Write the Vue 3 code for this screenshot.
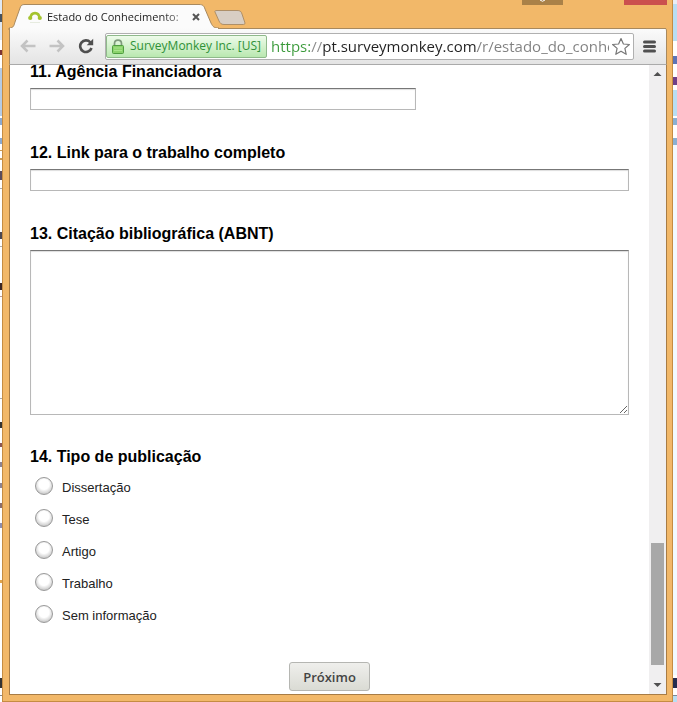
<template>
  <div class="desktop">
    <svg class="behind behind-left" viewBox="0 0 2 702" preserveAspectRatio="none" aria-hidden="true">
      <rect v-for="(s, i) in leftStrips" :key="i" x="0" :y="s[0]" width="2" :height="s[1]" :fill="s[2]" />
    </svg>
    <svg class="behind behind-right" viewBox="0 0 4 702" preserveAspectRatio="none" aria-hidden="true">
      <rect v-for="(s, i) in rightStrips" :key="i" x="0" :y="s[0]" width="4" :height="s[1]" :fill="s[2]" />
    </svg>

    <div class="window">
      <div class="tab-strip">
        <div class="tab">
          <svg class="tab-shape" width="236" height="28" viewBox="0 0 236 28" aria-hidden="true">
            <path d="M0 30 V28 C5 28 5 25 6 22 L11 8 C12 5 13 4.500 16 4.500 H190 C194 4.500 195 6 196 9 L202 23 C204 27 205 28 210 28 V30 Z" fill="#fbfbfb" stroke="#a8895e" />
            <path d="M208 10.500 H228 C231 10.500 232 11 233 14 L236 23 C236 24.500 235 24.500 233 24.500 H215 C212 24.500 211 23 210 21 L206 12 C205.500 11 206 10.500 208 10.500 Z" fill="#d8cec4" stroke="#ae8f68" />
          </svg>
          <svg class="favicon" width="16" height="14" viewBox="0 0 16 14" aria-hidden="true">
            <path d="M3.500 8 C4 1.500 12 1.500 12.500 8" fill="none" stroke="#a4c32f" stroke-width="2.600" />
            <circle cx="3.200" cy="8" r="2.100" fill="#a4c32f" />
            <circle cx="12.800" cy="8" r="2.100" fill="#a4c32f" />
            <path d="M3 12.500 H13" stroke="#e6ebdf" />
          </svg>
          <span class="tab-title">Estado do Conhecimento:</span>
          <button type="button" class="tab-close" aria-label="Fechar guia">
            <svg width="8" height="8" viewBox="0 0 8 8"><path d="M1 1 L7 7 M7 1 L1 7" stroke="#555" stroke-width="2" /></svg>
          </button>
        </div>
        <div class="caption-buttons">
          <span class="caption user">
            <svg width="7" height="2" viewBox="0 0 7 2"><path d="M1 0 Q3.500 2.500 6 0" fill="none" stroke="#fff" /></svg>
          </span>
          <span class="caption close"></span>
        </div>
      </div>

      <div class="toolbar">
        <button type="button" class="nav-btn" aria-label="Voltar">
          <svg width="16" height="14" viewBox="0 0 16 14"><path d="M15.500 7 H2 M7.500 1.500 L2 7 L7.500 12.500" fill="none" stroke="#c3c3c3" stroke-width="2.500" /></svg>
        </button>
        <button type="button" class="nav-btn" aria-label="Avançar">
          <svg width="16" height="14" viewBox="0 0 16 14"><path d="M0.500 7 H14 M8.500 1.500 L14 7 L8.500 12.500" fill="none" stroke="#c3c3c3" stroke-width="2.500" /></svg>
        </button>
        <button type="button" class="nav-btn" aria-label="Recarregar">
          <svg width="16" height="16" viewBox="0 0 16 16">
            <path d="M12.300 4.300 A5.800 5.800 0 1 0 13.500 10" fill="none" stroke="#4f4f4f" stroke-width="2.600" />
            <path d="M15.200 0.800 V7.300 H8.700 Z" fill="#4f4f4f" />
          </svg>
        </button>
        <div class="omnibox">
          <button type="button" class="certificate">
            <svg width="12" height="15" viewBox="0 0 12 15" aria-hidden="true">
              <path d="M2.500 7 V4.500 C2.500 0 9.500 0 9.500 4.500 V7" fill="none" stroke="#7f9a7c" stroke-width="1.700" />
              <rect x="0.500" y="6.500" width="11" height="8" rx="1" fill="#8bd36c" stroke="#4f9e3f" />
              <path d="M2 9 H10 M2 11.500 H10" stroke="#a9e58d" />
            </svg>
            <span>SurveyMonkey Inc. [US]</span>
          </button>
          <input v-model="url" class="url" type="text" aria-label="Endereço" spellcheck="false">
          <button type="button" class="star" aria-label="Favoritos">
            <svg width="20" height="19" viewBox="0 0 20 19"><path d="M10 1.500 L12.400 7 L18.400 7.500 L13.900 11.400 L15.200 17.300 L10 14.200 L4.800 17.300 L6.100 11.400 L1.600 7.500 L7.600 7 Z" fill="#fff" stroke="#777" stroke-width="1.200" stroke-linejoin="round" /></svg>
          </button>
        </div>
        <button type="button" class="menu-btn" aria-label="Menu">
          <svg width="13" height="13" viewBox="0 0 13 13"><path d="M1.500 2 H11.500 M1.500 6.500 H11.500 M1.500 11 H11.500" stroke="#505050" stroke-width="3" stroke-linecap="round" /></svg>
        </button>
      </div>

      <div class="viewport">
        <form class="survey" @submit.prevent>
          <div v-for="q in questions" :key="q.id" class="question">
            <label class="question-title" :for="q.id">{{ q.title }}</label>
            <textarea v-if="q.multiline" :id="q.id" v-model="answers[q.id]" class="field area"></textarea>
            <input v-else :id="q.id" v-model="answers[q.id]" type="text" class="field" :class="{ short: q.short }">
          </div>

          <fieldset class="question choices">
            <legend class="question-title">14. Tipo de publicação</legend>
            <label v-for="option in options" :key="option" class="choice">
              <input v-model="answers.tipo" type="radio" name="tipo" :value="option">
              <span>{{ option }}</span>
            </label>
          </fieldset>

          <button type="submit" class="next-btn">Próximo</button>
        </form>

        <div class="scrollbar" aria-hidden="true">
          <svg class="arrow" width="17" height="17" viewBox="0 0 17 17"><path d="M4.500 11 L8.500 7 L12.500 11 Z" fill="#505050" /></svg>
          <div class="track"><div class="thumb"></div></div>
          <svg class="arrow" width="17" height="17" viewBox="0 0 17 17"><path d="M4.500 6 L8.500 10 L12.500 6 Z" fill="#505050" /></svg>
        </div>
      </div>
    </div>
  </div>
</template>

<script setup>
import { reactive, ref } from 'vue'

const url = ref('https://pt.surveymonkey.com/r/estado_do_conhecimento')

const questions = [
  { id: 'agencia', title: '11. Agência Financiadora', short: true },
  { id: 'link', title: '12. Link para o trabalho completo' },
  { id: 'citacao', title: '13. Citação bibliográfica (ABNT)', multiline: true },
]

const options = ['Dissertação', 'Tese', 'Artigo', 'Trabalho', 'Sem informação']

const answers = reactive({ agencia: '', link: '', citacao: '', tipo: '' })

// [y, height, color] of the windows lying behind this one
const leftStrips = [
  [0, 40, '#dfe8f3'],
  [14, 8, '#44515f'],
  [50, 5, '#7c3434'],
  [68, 48, '#b5cbe5'],
  [118, 7, '#8ba9cf'],
  [138, 6, '#8ba9cf'],
  [150, 1, '#c99a55'],
  [158, 2, '#c99a55'],
  [171, 9, '#5a4c5c'],
  [188, 1, '#aaaaaa'],
  [232, 7, '#4b4752'],
  [246, 1, '#aaaaaa'],
  [283, 7, '#3a2525'],
  [296, 1, '#b99797'],
  [398, 1, '#aaaaaa'],
  [422, 6, '#333333'],
  [443, 4, '#8a5555'],
  [462, 5, '#8c8292'],
  [483, 5, '#8c8292'],
  [503, 5, '#8a6d6d'],
  [523, 5, '#8c8cae'],
  [580, 3, '#e0a44c'],
  [678, 10, '#333333'],
  [695, 1, '#888888'],
]

const rightStrips = [
  [0, 4, '#e9eef5'],
  [4, 37, '#b9def3'],
  [56, 8, '#5d74b5'],
  [77, 8, '#6f4088'],
  [90, 26, '#b9def3'],
  [118, 7, '#8ab0d2'],
  [138, 7, '#8ab0d2'],
  [145, 530, '#f2faff'],
  [678, 10, '#252d4e'],
  [695, 1, '#7c8794'],
  [696, 6, '#b8def3'],
]
</script>

<style>
body {
  margin: 0;
}
</style>

<style scoped>
.desktop {
  position: relative;
  min-height: 100vh;
  box-sizing: border-box;
  padding: 0 4px 0 2px;
  display: flex;
  background: #fff;
  font-family: "Liberation Sans", Arial, sans-serif;
}

.behind {
  position: absolute;
  top: 0;
  height: 100%;
}
.behind-left { left: 0; width: 2px; }
.behind-right { right: 0; width: 4px; }

.window {
  flex: 1;
  min-width: 0;
  display: flex;
  flex-direction: column;
  box-sizing: border-box;
  padding: 0 5px 6px 6px;
  background: #f2b869;
  border-left: 1px solid #c58c42;
  border-right: 1px solid #c58c42;
  border-bottom: 1px solid #c58c42;
}

button {
  padding: 0;
  border: none;
  background: none;
  cursor: pointer;
}

svg {
  display: block;
}

.tab-strip {
  display: flex;
  justify-content: space-between;
  height: 28px;
}

.tab {
  position: relative;
  display: flex;
  align-items: center;
  width: 210px;
  box-sizing: border-box;
  padding: 6px 16px 0 18px;
}

.tab-shape {
  position: absolute;
  top: 0;
  left: 0;
  overflow: visible;
}

.favicon,
.tab-title,
.tab-close {
  position: relative;
}

.favicon {
  flex: none;
  margin-right: 4px;
}

.tab-title {
  flex: none;
  width: 138px;
  overflow: hidden;
  white-space: nowrap;
  font: 11px/18px "Open Sans", "Noto Sans", sans-serif;
  color: #222;
  mask-image: linear-gradient(to right, #000 114px, rgba(0,0,0,0.4) 138px);
}

.tab-close {
  margin-left: 7px;
}

.caption-buttons {
  display: flex;
  align-items: flex-start;
  gap: 60px;
}

.caption {
  display: flex;
  justify-content: center;
  height: 5px;
}
.caption.user { width: 41px; margin-right: 1px; background: #aa8148; }
.caption.close { width: 43px; background: #cb504e; }

.toolbar {
  position: relative;
  display: flex;
  align-items: center;
  height: 37px;
  box-sizing: border-box;
  padding: 0 10px 0 10px;
  gap: 8px;
  background: linear-gradient(#fbfbfb, #e4e4e4);
  border: 1px solid #a8895e;
  border-top: none;
  border-bottom-color: #aaa;
  border-radius: 0 3px 0 0;
}
.toolbar::before {
  content: "";
  position: absolute;
  top: 0;
  left: 208px;
  right: 0;
  height: 1px;
  background: #a8895e;
}

.nav-btn {
  flex: none;
  width: 21px;
}

.omnibox {
  flex: 1;
  min-width: 0;
  display: flex;
  align-items: center;
  height: 27px;
  box-sizing: border-box;
  margin-left: -2px;
  background: #fff;
  border: 1px solid #b0b0b0;
  border-radius: 2px;
}

.certificate {
  flex: none;
  display: flex;
  align-items: center;
  gap: 6px;
  height: 23px;
  padding: 0 5px;
  border: 1px solid #8fb98b;
  border-radius: 2px;
  background: linear-gradient(#eefbea, #b9e8b0);
  font: 12px/18px "Open Sans", "Noto Sans", sans-serif;
  color: #2f9138;
  white-space: nowrap;
}

/* scheme in green, host in black, path in grey */
.url {
  flex: 1;
  min-width: 0;
  height: 23px;
  margin-left: 4px;
  padding: 0;
  border: none;
  outline: none;
  font: 15px/22px "Open Sans", "Noto Sans", sans-serif;
  color: transparent;
  background: linear-gradient(to right, #3a9a3a 40px, #888 40px, #888 52px, #222 52px, #222 206px, #808080 206px);
  background-clip: text;
}

.star {
  flex: none;
  margin: 0 2px;
}

.menu-btn {
  flex: none;
  margin-left: 1px;
}

.viewport {
  flex: 1;
  display: flex;
  overflow: hidden;
  background: #fff;
  border: 1px solid #a87c45;
  border-top: none;
}

.survey {
  flex: 1;
  min-width: 0;
  display: flex;
  flex-direction: column;
  margin-top: -4px;
  padding: 0 20px 3px;
}

.question {
  margin: 0 0 32px;
  padding: 0;
  border: none;
}

.question-title {
  display: block;
  margin-bottom: 5px;
  padding: 0;
  font-size: 16px;
  line-height: 22px;
  font-weight: bold;
  color: #000;
}

.field {
  display: block;
  width: 100%;
  height: 22px;
  box-sizing: border-box;
  padding: 2px;
  border: 1px solid #b8b8b8;
  border-top-color: #777;
  border-radius: 0;
  background: #fff;
  box-shadow: inset 0 1px 1px #ddd;
  font: 13px/16px "Liberation Sans", Arial, sans-serif;
}
.field.short { width: 64.4%; }
.field.area { height: 165px; resize: both; }

.question:has(.area) {
  margin-bottom: 31px;
}

.choices .question-title {
  margin-bottom: 2px;
}

.choice {
  display: flex;
  align-items: center;
  gap: 9px;
  height: 32px;
  font-size: 13px;
  line-height: 16px;
  color: #222;
}
.choice span {
  padding-top: 4px;
}
.choice input {
  appearance: none;
  width: 18px;
  height: 18px;
  margin: 0 0 0 5px;
  border: 1px solid #999;
  border-radius: 50%;
  background: radial-gradient(circle at 50% 40%, #fff 40%, #ccc 75%);
}
.choice input:checked {
  background: radial-gradient(circle, #444 30%, #fff 35%);
}

.next-btn {
  align-self: center;
  height: 29px;
  padding: 0 13px;
  border: 1px solid #b5b6b2;
  border-radius: 3px;
  background: linear-gradient(#efefec, #dadbd4);
  font: 600 13px/18px "Open Sans", "Noto Sans", sans-serif;
  color: #444;
}

.scrollbar {
  flex: none;
  display: flex;
  flex-direction: column;
  width: 17px;
  background: #f0eff0;
}

.track {
  flex: 1;
  display: flex;
  flex-direction: column;
  justify-content: flex-end;
  padding: 0 2px 12px;
}

.thumb {
  height: 21%;
  background: #a8a8a8;
}
</style>
